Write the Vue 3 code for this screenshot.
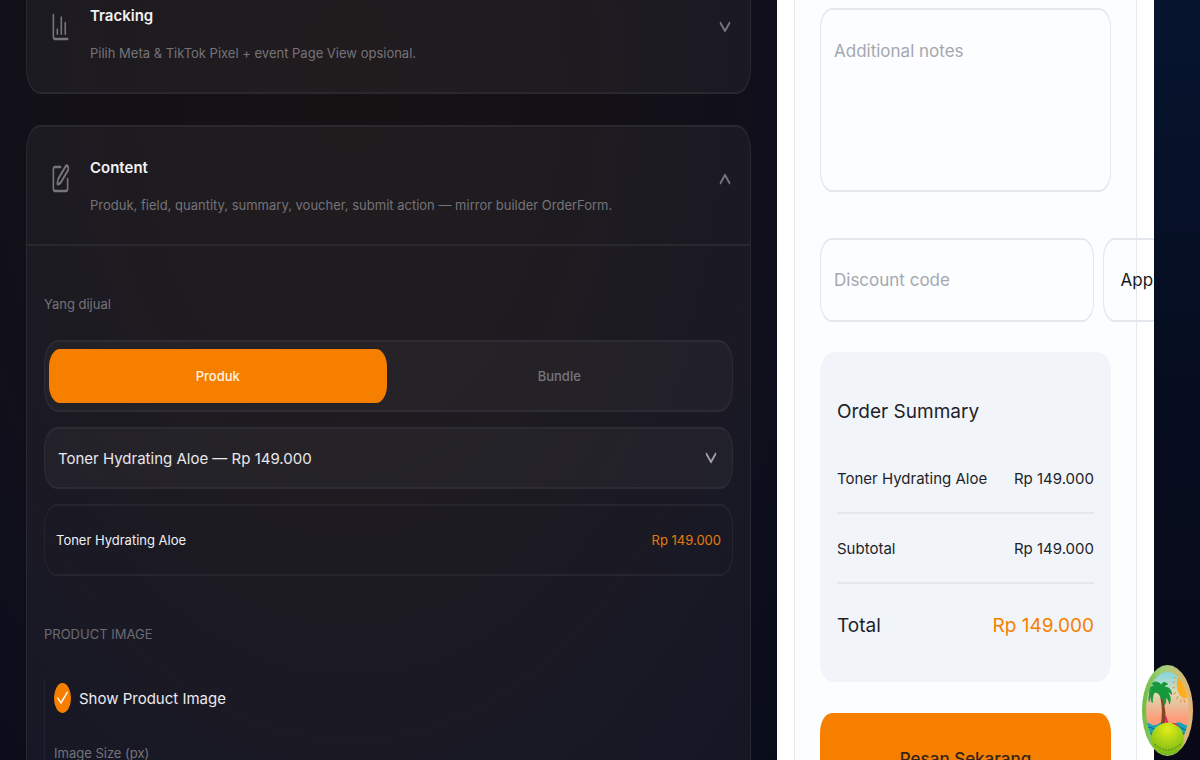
<script setup>
import { ref } from 'vue'

const price = 'Rp 149.000'
const product = 'Toner Hydrating Aloe'
const kind = ref('Produk')
const showImage = ref(true)
const kinds = ['Produk', 'Bundle']
</script>

<template>
  <div class="page">
    <main class="editor">
      <section class="card">
        <header class="head">
          <svg class="icon" viewBox="0 0 24 24" preserveAspectRatio="none" aria-hidden="true">
            <path d="M3 3v16a2 2 0 0 0 2 2h16M18 17V9M13 17V5M8 17v-3" />
          </svg>
          <div class="copy">
            <h2>Tracking</h2>
            <p>Pilih Meta &amp; TikTok Pixel + event Page View opsional.</p>
          </div>
          <button class="toggle" type="button" aria-label="Expand Tracking">
            <svg viewBox="0 0 24 24" preserveAspectRatio="none"><path d="m6 9 6 6 6-6" /></svg>
          </button>
        </header>
      </section>

      <section class="card tall">
        <header class="head ruled">
          <svg class="icon" viewBox="0 0 24 24" preserveAspectRatio="none" aria-hidden="true">
            <path d="M12 3H5a2 2 0 0 0-2 2v14a2 2 0 0 0 2 2h14a2 2 0 0 0 2-2v-7" />
            <path d="M18.375 2.625a1 1 0 0 1 3 3l-9.013 9.014a2 2 0 0 1-.853.505l-2.873.84a.5.5 0 0 1-.62-.62l.84-2.873a2 2 0 0 1 .506-.852z" />
          </svg>
          <div class="copy">
            <h2>Content</h2>
            <p>Produk, field, quantity, summary, voucher, submit action — mirror builder OrderForm.</p>
          </div>
          <button class="toggle" type="button" aria-label="Collapse Content">
            <svg viewBox="0 0 24 24" preserveAspectRatio="none"><path d="m6 15 6-6 6 6" /></svg>
          </button>
        </header>

        <div class="body">
          <label class="label" for="product">Yang dijual</label>
          <div class="segments">
            <button v-for="k in kinds" :key="k" type="button" :class="{ on: kind === k }" @click="kind = k">{{ k }}</button>
          </div>
          <div class="select">
            <select id="product"><option>{{ product }} — {{ price }}</option></select>
            <svg viewBox="0 0 24 24" preserveAspectRatio="none" aria-hidden="true"><path d="m6 9 6 6 6-6" /></svg>
          </div>
          <div class="picked">
            <span>{{ product }}</span>
            <span class="orange">{{ price }}</span>
          </div>

          <h3>PRODUCT IMAGE</h3>
          <div class="nested">
            <label class="check">
              <span class="box">
                <input v-model="showImage" type="checkbox">
                <svg v-if="showImage" viewBox="0 0 18 30" aria-hidden="true"><path d="m4 16 3.5 5L14 10" /></svg>
              </span>
              Show Product Image
            </label>
            <label class="size" for="size">Image Size (px)</label>
            <input id="size" class="number" type="text">
          </div>
        </div>
      </section>
    </main>

    <aside class="preview">
      <form class="sheet" @submit.prevent>
        <textarea class="field" aria-label="Additional notes" placeholder="Additional notes"></textarea>
        <div class="voucher">
          <input class="field" type="text" aria-label="Discount code" placeholder="Discount code">
          <button class="apply" type="button">Apply</button>
        </div>
        <section class="summary">
          <h2>Order Summary</h2>
          <div class="line"><span>{{ product }}</span><span>{{ price }}</span></div>
          <div class="line"><span>Subtotal</span><span>{{ price }}</span></div>
          <div class="total"><span>Total</span><span class="sum">{{ price }}</span></div>
        </section>
        <button class="submit" type="submit">Pesan Sekarang</button>
      </form>
    </aside>

    <button class="island" type="button" aria-label="Open island menu">
      <svg viewBox="0 0 50 90" preserveAspectRatio="none">
        <defs>
          <linearGradient id="sky" x1="0" y1="0" x2="0" y2="1">
            <stop offset="0" stop-color="#62d5ef" /><stop offset=".3" stop-color="#d9dcb8" /><stop offset=".6" stop-color="#ff9b78" />
          </linearGradient>
          <linearGradient id="rim" x1="0" y1="0" x2="1" y2="0">
            <stop offset="0" stop-color="#70bd43" /><stop offset=".4" stop-color="#a0cf79" /><stop offset="1" stop-color="#e7b277" />
          </linearGradient>
          <radialGradient id="sand" cx=".5" cy=".2" r=".8">
            <stop offset="0" stop-color="#e3ed17" /><stop offset="1" stop-color="#75b817" />
          </radialGradient>
          <clipPath id="lens"><ellipse cx="25" cy="45" rx="21" ry="38" /></clipPath>
        </defs>
        <ellipse cx="25" cy="45" rx="25" ry="45" fill="url(#rim)" />
        <g clip-path="url(#lens)">
          <path d="M0 0h50v90H0z" fill="url(#sky)" />
          <ellipse cx="42" cy="19" rx="8" ry="14" fill="#ffad20" />
          <path d="M31 12l2 1M30 17h2M30 23l2-1M31 29l2-2M34 34l1-3M38 37v-3M42 37l-1-3" stroke="#f8823b" />
          <path d="M0 58q4-3 8 0t8 0 8 0 8 0 8 0 10 0v32H0z" fill="#16a5b8" />
          <path d="M3 63q4-3 8 0t8 0m13 0q4-3 8 0t8 0M3 69q4-3 8 0m26 0q4-3 8 0" stroke="#08677f" fill="none" />
          <path d="M18 32q3 15 0 29h5q1-17-3-29z" fill="#87451f" />
          <path d="M19 33Q17 26 12 27q-2 3-2 10-2-4-1-8-2 2-2 7-1-8 3-12-3 0-3 3 0-7 6-6-2-3-4-2 5-5 10 1 2-5 6-1-3 0-3 3 6-1 7 7-2-3-4-2 4 4 2 11-1-5-4-7 1 5-1 8-1-6-3-6z" fill="#16983c" stroke="#16983c" stroke-linejoin="round" />
          <path d="M23 51l3 10 5-3 4 2v6M26 61v4" stroke="#e71862" stroke-width="1.6" fill="none" />
        </g>
        <ellipse cx="25" cy="73" rx="16" ry="16" fill="url(#sand)" />
        <path d="M12 78q13 12 26 0" fill="none" stroke="#5c8c16" stroke-dasharray="2 1" />
      </svg>
    </button>
  </div>
</template>

<style>
body { margin: 0; background: #090c1a; }
</style>

<style scoped>
* { box-sizing: border-box; }
.page {
  height: 100vh;
  overflow: hidden;
  display: grid;
  grid-template-columns: 777fr 377fr 46fr;
  font-family: Inter, "Noto Sans", sans-serif;
  background: linear-gradient(#07152f, #060d20 50%, #080917);
}
h2, h3, p { margin: 0; }
button, input, select, textarea { font-family: inherit; margin: 0; }
button { cursor: pointer; }
svg { fill: none; }

.editor {
  min-width: 0;
  overflow: hidden;
  padding: 0 26px;
  display: flex;
  flex-direction: column;
  gap: 31px;
  background: radial-gradient(ellipse at 45% 10%, #161214 0%, #141116 40%, #0f0f1c 75%, #090c1b 100%);
}
.card {
  flex: none;
  border: solid #2a282f;
  border-width: 2px 1px;
  border-radius: 14px / 26px;
  background: rgba(255, 255, 255, 0.045);
}
.card:first-child { margin-top: -27px; }
.tall { min-height: 680px; }
.head {
  display: flex;
  align-items: flex-start;
  padding: 22px 16px 20px 24px;
}
.ruled { border-bottom: 2px solid #2a282f; }
.icon { width: 19px; height: 32px; margin-top: 14px; flex: none; }
.icon path, .toggle path, .select path {
  stroke: #78767c;
  stroke-width: 2;
  stroke-linecap: round;
  stroke-linejoin: round;
}
.copy { flex: 1; min-width: 0; padding-left: 20px; }
.copy h2 { font-size: 15px; line-height: 38px; font-weight: 600; color: #f2f1f3; }
.copy p { font-size: 13px; line-height: 37px; color: #75737a; white-space: nowrap; }
.toggle {
  width: 18px;
  height: 32px;
  margin-top: 14px;
  padding: 0;
  border: 0;
  background: none;
}
.toggle svg { display: block; width: 18px; height: 32px; }

.body { padding: 42px 17px 0; display: flex; flex-direction: column; }
.label { font-size: 13px; line-height: 32px; color: #75737a; }
.segments {
  display: grid;
  grid-template-columns: 1fr 1fr;
  gap: 4px;
  height: 72px;
  margin-top: 20px;
  padding: 7px 4px;
  border: solid #2d2b33;
  border-width: 2px 1px;
  border-radius: 14px / 24px;
  background: rgba(255, 255, 255, 0.03);
}
.segments button {
  border: 0;
  border-radius: 11px / 18px;
  background: none;
  font-size: 13px;
  font-weight: 500;
  color: #77757c;
}
.segments .on { background: #f77f00; color: #fff3e2; }
.select { position: relative; margin-top: 15px; }
.select select {
  appearance: none;
  display: block;
  width: 100%;
  height: 62px;
  padding: 0 40px 0 13px;
  border: solid #2d2b33;
  border-width: 2px 1px;
  border-radius: 13px / 22px;
  background: rgba(255, 255, 255, 0.035);
  color: #e9e8ed;
  font-size: 15px;
}
.select svg {
  position: absolute;
  right: 13px;
  top: 15px;
  width: 18px;
  height: 32px;
  pointer-events: none;
}
.select path { stroke: #a09fa6; }
.picked {
  display: flex;
  align-items: center;
  justify-content: space-between;
  height: 72px;
  margin-top: 15px;
  padding: 0 11px;
  border: solid #26242d;
  border-width: 2px 1px;
  border-radius: 13px / 22px;
  font-size: 13px;
  color: #f0eff3;
}
.picked .orange { color: #e57a0c; }
h3 { margin-top: 42px; font-size: 13px; line-height: 32px; font-weight: 400; color: #6c6b74; }
.nested { margin-top: 28px; padding: 0 9px; border-left: 1px solid #20212c; display: flex; flex-direction: column; }
.check { display: flex; align-items: center; gap: 8px; height: 40px; font-size: 15px; color: #eceaf0; }
.box { position: relative; width: 17px; height: 30px; }
.box input { appearance: none; display: block; width: 17px; height: 30px; border-radius: 50%; border: 1px solid #77757c; }
.box input:checked { background: #f77f00; border-color: #f77f00; }
.box svg { position: absolute; inset: 0; pointer-events: none; }
.box path { stroke: #fff; stroke-width: 1.5; stroke-linecap: round; }
.size { margin-top: 20px; font-size: 13px; line-height: 30px; color: #75737a; }
.number { height: 60px; border: 1px solid #2d2b33; background: none; color: #fff; }

.preview { min-width: 0; overflow: hidden; padding: 0 17px; background: #fff; }
.sheet {
  min-height: 100%;
  padding: 8px 25px 0;
  border: solid #e4e9ed;
  border-width: 0 1px;
  background: #fbfdfe;
  display: flex;
  flex-direction: column;
}
.field {
  display: block;
  width: 100%;
  border: solid #e4e7eb;
  border-width: 2px 1px;
  border-radius: 12px / 20px;
  background: #fcfdfe;
  padding: 0 13px;
  font-size: 17px;
  color: #171923;
}
.field::placeholder { color: #a3a8b0; opacity: 1; }
textarea.field { height: 184px; padding-top: 25px; line-height: 32px; resize: none; }
.voucher { display: flex; gap: 9px; margin-top: 46px; height: 84px; }
.voucher .field { flex: none; width: 94%; }
.apply {
  flex: none;
  padding: 0 17px;
  border: solid #e4e7eb;
  border-width: 2px 1px;
  border-radius: 12px / 20px;
  background: none;
  color: #171923;
  font-size: 17px;
}
.summary { margin-top: 30px; padding: 28px 17px 16px; border-radius: 14px / 20px; background: #f1f4f9; color: #1d1f29; }
.summary h2 { font-size: 19px; line-height: 64px; font-weight: 400; }
.line, .total { display: flex; justify-content: space-between; align-items: center; white-space: nowrap; }
.line { height: 70px; border-bottom: 2px solid #e3e7eb; font-size: 15px; }
.total { height: 82px; font-size: 19px; }
.sum { color: #f77f00; }
.submit {
  height: 92px;
  margin-top: 31px;
  border: 0;
  border-radius: 12px / 20px;
  background: #f77f00;
  color: #33251a;
  font-size: 17px;
  font-weight: 500;
}
.island {
  position: fixed;
  right: 7px;
  bottom: 4px;
  width: 51px;
  height: 91px;
  padding: 0;
  border: 0;
  background: none;
}
.island svg { display: block; width: 100%; height: 100%; }
</style>
